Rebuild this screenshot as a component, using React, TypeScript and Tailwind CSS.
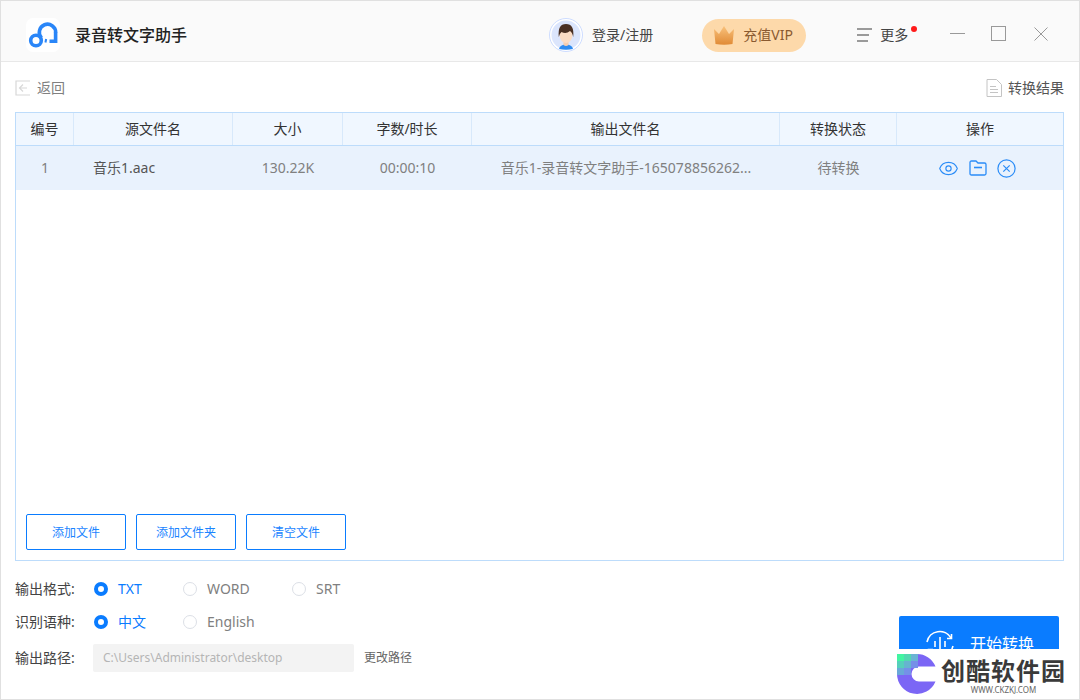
import { Eye } from 'lucide-react'

const COLUMNS = [
  { name: '编号' },
  { name: '源文件名' },
  { name: '大小' },
  { name: '字数/时长' },
  { name: '输出文件名' },
  { name: '转换状态' },
  { name: '操作' },
]

function Logo() {
  return (
    <div className="flex h-[34px] w-[34px] items-center justify-center rounded-[7px] bg-white">
      <svg width="34" height="34" viewBox="0 0 34 34" fill="none" stroke="#2a86f8" strokeWidth="3.6">
        <circle cx="10" cy="22.5" r="5.3" />
        <path d="M15.5 20 A8.2 8.2 0 1 1 29.7 14.5" />
        <path d="M29.6 14 V23.2 H23.5" />
        <path d="M20.8 23 L18.8 22.6" />
      </svg>
    </div>
  )
}

function Avatar() {
  return (
    <svg width="34" height="34" viewBox="0 0 34 34">
      <circle cx="17" cy="17" r="16.5" fill="#fff" stroke="#cddcff" />
      <circle cx="17" cy="17" r="14.5" fill="#dbe5fc" />
      <path d="M10 31 Q11 26.5 17 26.5 Q23 26.5 24 31 Q17 32.5 10 31Z" fill="#2e8bf0" />
      <path d="M14.5 22 H19.5 V27 Q17 29 14.5 27Z" fill="#f6cdb0" />
      <ellipse cx="17" cy="17.5" rx="6.4" ry="7.4" fill="#fbdcc4" />
      <path d="M9.8 19 Q8.4 6 17 6 Q25.6 6 24.2 19 Q23.4 14.5 21 13 Q17 16.5 12.5 14 Q10.6 15.5 9.8 19Z" fill="#4a3023" />
    </svg>
  )
}

function Crown() {
  return (
    <svg width="22" height="20" viewBox="0 0 22 20">
      <defs>
        <linearGradient id="crown" x1="0" y1="0" x2="0" y2="1">
          <stop offset="0" stopColor="#f9c27c" />
          <stop offset="1" stopColor="#e08a35" />
        </linearGradient>
      </defs>
      <path d="M1 4 L6 9 L11 1 L16 9 L21 4 L19.5 19 Q11 20.5 2.5 19Z" fill="url(#crown)" />
    </svg>
  )
}

function Radio({ checked }: { checked?: boolean }) {
  return checked ? (
    <span className="h-[14px] w-[14px] rounded-full border-[4px] border-[#0a7cff] bg-white" />
  ) : (
    <span className="h-[14px] w-[14px] rounded-full border border-[#dcdfe6] bg-white" />
  )
}

function Option({ label, checked, width }: { label: string; checked?: boolean; width: string }) {
  return (
    <label className={`flex items-center gap-[10px] ${width}`}>
      <Radio checked={checked} />
      <span className={checked ? 'text-[#0a7cff]' : 'text-[#808080]'}>{label}</span>
    </label>
  )
}

function TitleBar() {
  return (
    <header className="flex h-[61px] shrink-0 items-center border-b border-[#e8e8e8] bg-[#fafafa] pt-[8px]">
      <div className="ml-[25px]">
        <Logo />
      </div>
      <h1 className="ml-[15px] text-base font-medium text-[#222]">录音转文字助手</h1>

      <div className="ml-[362px] flex items-center gap-[9px]">
        <Avatar />
        <span className="text-sm text-[#444]">登录/注册</span>
      </div>

      <button className="ml-[49px] flex h-[33px] w-[104px] items-center gap-[8px] rounded-full bg-[#fdd9aa] pl-[11px] text-sm text-[#8a5a30]">
        <Crown />
        充值VIP
      </button>

      <div className="relative ml-[51px] flex items-center gap-[8px] text-sm text-[#444]">
        <span className="flex w-[15px] flex-col gap-[4px]">
          <span className="h-[2px] w-[15px] bg-[#9a9a9a]" />
          <span className="h-[2px] w-[12px] bg-[#9a9a9a]" />
          <span className="h-[2px] w-[11px] bg-[#9a9a9a]" />
        </span>
        更多
        <span className="absolute -right-[9px] top-[1px] h-[6px] w-[6px] rounded-full bg-[#ff1a1a]" />
      </div>

      <div className="mb-[3px] ml-[42px] h-px w-[15px] bg-[#999]" />
      <div className="mb-[3px] ml-[26px] h-[15px] w-[15px] border border-[#999]" />
      <svg className="mb-[3px] ml-[28px]" width="14" height="14" viewBox="0 0 14 14" fill="none" stroke="#999">
        <path d="M.5 .5 L13.5 13.5 M13.5 .5 L.5 13.5" />
      </svg>
    </header>
  )
}

function Toolbar() {
  return (
    <div className="flex h-[50px] items-center justify-between pl-[14px] pr-[15px] pt-[2px] text-sm">
      <button className="flex items-center gap-[6px] text-[#808080]">
        <svg width="16" height="16" viewBox="0 0 16 16" fill="none" stroke="#d8d8d8" strokeWidth="1.2">
          <path d="M15 1 H1 V15 H15" />
          <path d="M12 8 H4.5 M8 4.5 L4.5 8 L8 11.5" />
        </svg>
        返回
      </button>
      <button className="flex items-center gap-[6px] text-[#555]">
        <svg width="16" height="18" viewBox="0 0 16 18" fill="none" stroke="#c4c4c4">
          <path d="M1 .5 H10.5 L15.5 5.5 V17.5 H1Z" />
          <path d="M4 7.5 H10 M4 10.5 H12 M4 13.5 H12" />
        </svg>
        转换结果
      </button>
    </div>
  )
}

function FileTable() {
  return (
    <section className="ml-[14px] mr-[15px] flex h-[449px] flex-col border border-[#bddcfb]">
      <div className="grid h-[33px] grid-cols-[58px_159px_110px_129px_308px_117px_1fr] border-b border-[#bddcfb] bg-[#f0f7ff] text-sm text-[#333]">
        {COLUMNS.map((col, i) => (
          <div
            key={col.name}
            className={`flex items-center justify-center ${i < 6 ? 'border-r border-[#d8e9fb]' : ''}`}
          >
            {col.name}
          </div>
        ))}
      </div>

      <div className="grid h-[44px] grid-cols-[58px_159px_110px_129px_308px_117px_1fr] items-center bg-[#e9f2fd] text-sm text-[#808080]">
        <div className="text-center">1</div>
        <div className="pl-[19px] text-[#555]">音乐1.aac</div>
        <div className="text-center">130.22K</div>
        <div className="text-center">00:00:10</div>
        <div className="text-center">音乐1-录音转文字助手-165078856262...</div>
        <div className="text-center">待转换</div>
        <div className="flex items-center justify-center gap-[10px] pr-[6px] text-[#2a8cf7]">
          <Eye size={21} strokeWidth={1.3} />
          <svg width="18" height="16" viewBox="0 0 18 16" fill="none" stroke="currentColor" strokeWidth="1.3">
            <path d="M1 2.5 Q1 1 2.5 1 H7 L9 3 H15.5 Q17 3 17 4.5 V13.5 Q17 15 15.5 15 H2.5 Q1 15 1 13.5Z" />
            <path d="M5 7.5 H13" strokeWidth="1.6" />
          </svg>
          <svg width="19" height="19" viewBox="0 0 19 19" fill="none" stroke="currentColor" strokeWidth="1.2">
            <circle cx="9.5" cy="9.5" r="8.6" />
            <path d="M6.3 6.3 L12.7 12.7 M12.7 6.3 L6.3 12.7" />
          </svg>
        </div>
      </div>

      <div className="mt-auto flex gap-[10px] pb-[10px] pl-[10px]">
        {['添加文件', '添加文件夹', '清空文件'].map((label) => (
          <button
            key={label}
            className="h-[36px] w-[100px] rounded-[2px] border border-[#0a7cff] pt-[1px] text-xs text-[#1a84ff]"
          >
            {label}
          </button>
        ))}
      </div>
    </section>
  )
}

function OutputOptions() {
  return (
    <div className="flex items-start pl-[14px] pt-[11px] text-sm">
      <div className="flex flex-col">
        <div className="flex h-[33px] items-center">
          <span className="w-[79px] text-[#444]">输出格式:</span>
          <Option label="TXT" checked width="w-[89px]" />
          <Option label="WORD" width="w-[109px]" />
          <Option label="SRT" width="w-[60px]" />
        </div>
        <div className="flex h-[33px] items-center">
          <span className="w-[79px] text-[#444]">识别语种:</span>
          <Option label="中文" checked width="w-[89px]" />
          <Option label="English" width="w-[80px]" />
        </div>
        <div className="mt-[6px] flex h-[28px] items-center">
          <span className="w-[78px] text-[#444]">输出路径:</span>
          <div className="flex h-[28px] w-[261px] items-center rounded-[2px] bg-[#f3f3f3] pl-[10px] text-xs text-[#b5b5b5]">
            C:\Users\Administrator\desktop
          </div>
          <button className="ml-[10px] text-xs text-[#666]">更改路径</button>
        </div>
      </div>

      <button className="ml-auto mr-[20px] mt-[44px] flex h-[56px] w-[160px] items-center gap-[14px] rounded-[2px] bg-[#0a7cff] pl-[25px] text-base text-white">
        <svg width="32" height="32" viewBox="0 0 32 32" fill="none" stroke="#fff" strokeWidth="1.6">
          <path d="M3 14 A13 13 0 0 1 27 10 M29 18 A13 13 0 0 1 5 22" />
          <path d="M27.5 6 V10.5 H23 M4.5 26 V21.5 H9" />
          <path d="M11 13 V19 M16 9 V23 M21 13 V19" />
        </svg>
        开始转换
      </button>
    </div>
  )
}

function Watermark() {
  return (
    <div className="absolute bottom-0 right-0 flex h-[50px] w-[200px] items-center bg-white pl-[18px]">
      <svg width="40" height="40" viewBox="0 0 40 40">
        <path d="M20 0 A20 20 0 0 1 38.5 12.5 H22 A7.5 7.5 0 0 0 22 27.5 H38.5 A20 20 0 0 1 0 20 V0Z" fill="#7b66f5" />
        <rect x="0" y="0" width="7" height="7" fill="#42f5a2" />
        <rect x="7" y="0" width="7" height="7" fill="#52d8b0" />
        <rect x="14" y="0" width="7" height="7" fill="#6ab4d4" />
        <rect x="0" y="7" width="7" height="7" fill="#55d0bb" />
        <rect x="7" y="7" width="7" height="7" fill="#66b4cf" />
        <rect x="14" y="7" width="7" height="7" fill="#7590e8" />
        <rect x="0" y="14" width="7" height="7" fill="#69a8d8" />
        <rect x="7" y="14" width="7" height="7" fill="#7590e8" />
      </svg>
      <div className="ml-[4px] flex flex-col items-center pt-[2px]">
        <span className="text-2xl/[28px] font-bold tracking-[1px] text-[#3a3a3a]">创酷软件园</span>
        <span className="text-[8px]/[9px] text-[#666]">WWW.CKZKJ.COM</span>
      </div>
    </div>
  )
}

export default function App() {
  return (
    <div className="relative flex h-[700px] w-[1080px] flex-col overflow-hidden border border-[#e0e0e0] bg-white font-['Noto_Sans','Noto_Sans_CJK_SC',sans-serif]">
      <TitleBar />
      <Toolbar />
      <FileTable />
      <OutputOptions />
      <Watermark />
    </div>
  )
}
